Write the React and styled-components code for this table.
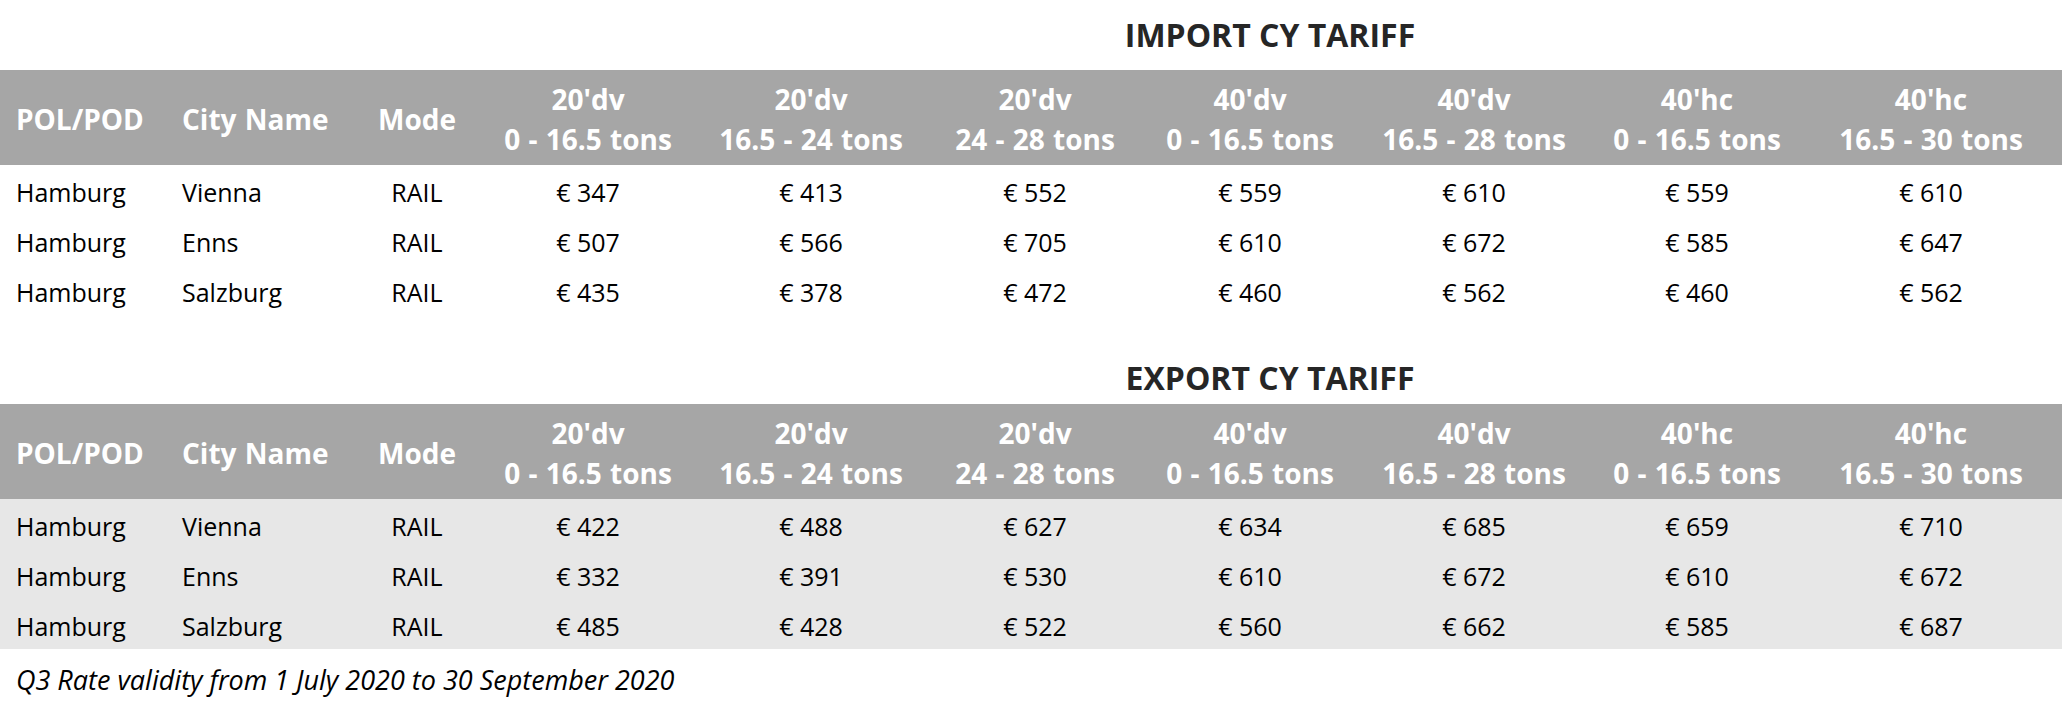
import React from 'react';
import styled, { createGlobalStyle } from 'styled-components';

const GlobalStyle = createGlobalStyle`
    html, body {
        margin: 0;
        padding: 0;
        background: #ffffff;
    }
    body {
        font-family: "Open Sans", "Noto Sans", "Liberation Sans", sans-serif;
        color: #000000;
    }
`;

const COLUMNS = '166px 166px 170px 172px 274px 174px 256px 192px 254px 214px';

const Page = styled.div`
    width: 2062px;
`;

const Section = styled.section`
    margin-top: ${props => props.$gap || 0}px;
`;

const Grid = styled.div`
    display: grid;
    grid-template-columns: ${COLUMNS};
    padding-right: 24px;
`;

const TitleRow = styled(Grid)`
    height: 70px;
    align-items: end;
`;

const Title = styled.h2`
    grid-column: 4 / -1;
    margin: 0;
    text-align: center;
    font-size: 32px;
    line-height: ${props => props.$line || 70}px;
    font-weight: 700;
    color: #262626;
`;

const HeaderRow = styled(Grid)`
    height: 95px;
    box-sizing: border-box;
    padding-top: 3px;
    background: #a6a6a6;
    align-items: center;
`;

const HeadCell = styled.div`
    display: flex;
    flex-direction: column;
    align-items: ${props => (props.$left ? 'flex-start' : 'center')};
    padding-left: ${props => (props.$left ? '16px' : '0')};
    font-size: 28px;
    font-weight: 700;
    line-height: 40px;
    word-spacing: 1px;
    color: #ffffff;
    white-space: nowrap;
`;

const Body = styled.div`
    background: ${props => (props.$shaded ? '#e7e7e7' : '#ffffff')};
`;

const Row = styled(Grid)`
    height: 50px;
    box-sizing: border-box;
    padding-top: 4px;
`;

const Cell = styled.div`
    text-align: ${props => (props.$left ? 'left' : 'center')};
    padding-left: ${props => (props.$left ? '16px' : '0')};
    font-size: 25px;
    line-height: 46px;
    white-space: nowrap;
`;

const Note = styled.p`
    margin: 0;
    padding: 8px 0 0 16px;
    font-size: 27px;
    line-height: 46px;
    font-style: italic;
`;

const headers = [
    ['POL/POD'],
    ['City Name'],
    ['Mode'],
    ["20'dv", '0 - 16.5 tons'],
    ["20'dv", '16.5 - 24 tons'],
    ["20'dv", '24 - 28 tons'],
    ["40'dv", '0 - 16.5 tons'],
    ["40'dv", '16.5 - 28 tons'],
    ["40'hc", '0 - 16.5 tons'],
    ["40'hc", '16.5 - 30 tons'],
];

const importRates = [
    ['Hamburg', 'Vienna', 'RAIL', 347, 413, 552, 559, 610, 559, 610],
    ['Hamburg', 'Enns', 'RAIL', 507, 566, 705, 610, 672, 585, 647],
    ['Hamburg', 'Salzburg', 'RAIL', 435, 378, 472, 460, 562, 460, 562],
];

const exportRates = [
    ['Hamburg', 'Vienna', 'RAIL', 422, 488, 627, 634, 685, 659, 710],
    ['Hamburg', 'Enns', 'RAIL', 332, 391, 530, 610, 672, 610, 672],
    ['Hamburg', 'Salzburg', 'RAIL', 485, 428, 522, 560, 662, 585, 687],
];

function Tariff({ title, rows, shaded, gap, titleLine }) {
    return (
        <Section $gap={gap}>
            <TitleRow>
                <Title $line={titleLine}>{title}</Title>
            </TitleRow>
            <HeaderRow>
                {headers.map((lines, i) => (
                    <HeadCell key={i} $left={i < 2}>
                        {lines.map(line => <span key={line}>{line}</span>)}
                    </HeadCell>
                ))}
            </HeaderRow>
            <Body $shaded={shaded}>
                {rows.map((row, r) => (
                    <Row key={r}>
                        {row.map((value, i) => (
                            <Cell key={i} $left={i < 2}>
                                {i > 2 ? '€ ' + value : value}
                            </Cell>
                        ))}
                    </Row>
                ))}
            </Body>
        </Section>
    );
}

export default function App() {
    return (
        <Page>
            <GlobalStyle />
            <Tariff title="IMPORT CY TARIFF" rows={importRates} />
            <Tariff title="EXPORT CY TARIFF" rows={exportRates} shaded gap={19} titleLine={52} />
            <Note>Q3 Rate validity from 1 July 2020 to 30 September 2020</Note>
        </Page>
    );
}
